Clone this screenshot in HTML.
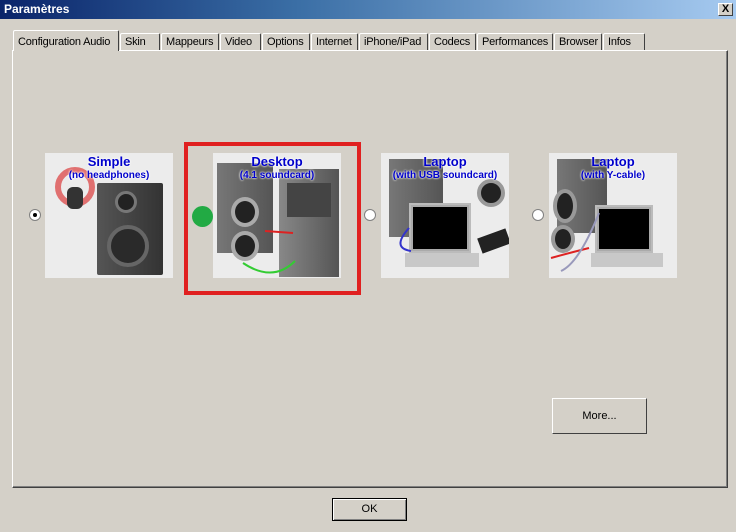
<!DOCTYPE html>
<html><head><meta charset="utf-8"><style>
*{box-sizing:border-box;margin:0;padding:0}
body{width:736px;height:532px;background:#d4d0c8;font-family:"Liberation Sans",sans-serif;font-size:11px;position:relative;overflow:hidden}
.title{position:absolute;left:0;top:0;width:736px;height:19px;background:linear-gradient(90deg,#0a246a,#3a6ea5 40%,#a6caf0);color:#fff;font-weight:bold;font-size:12px;line-height:19px;padding-left:4px}
.close{position:absolute;right:3px;top:3px;width:15px;height:13px;background:#d4d0c8;border:1px solid;border-color:#fff #404040 #404040 #fff;font-size:11px;line-height:11px;text-align:center;color:#000;font-weight:bold}
.tab{position:absolute;top:33px;height:18px;border:1px solid;border-color:#fff #404040 transparent #fff;border-bottom:none;border-radius:2px 2px 0 0;padding:0 4px;line-height:16px;font-size:11px;color:#000;background:#d4d0c8;letter-spacing:-0.2px}
.tab.a{top:30px;height:21px;z-index:2;line-height:22px}
.panel{position:absolute;left:12px;top:50px;width:716px;height:438px;border:1px solid;border-color:#fff #404040 #404040 #fff;box-shadow:inset -1px -1px 0 #808080}
.img{position:absolute;width:128px;height:125px;background:#ececec;overflow:hidden}
.t{position:absolute;left:0;width:100%;text-align:center;color:#0000cc;font-weight:bold;text-shadow:0 0 2px #fff,0 0 2px #fff}
.t1{top:1px;font-size:13px}.t2{top:17px;font-size:10px}
.radio{position:absolute;width:12px;height:12px;border-radius:50%;background:#fff;border:1px solid #808080}
.btn{position:absolute;background:#d4d0c8;border:1px solid;border-color:#fff #404040 #404040 #fff;text-align:center;font-size:11px}
</style></head><body>
<div class="title">Paramètres<div class="close">X</div></div>
<div class="tab a" style="left:13px;width:106px">Configuration Audio</div>
<div class="tab" style="left:120px;width:40px">Skin</div>
<div class="tab" style="left:161px;width:58px">Mappeurs</div>
<div class="tab" style="left:220px;width:41px">Video</div>
<div class="tab" style="left:262px;width:48px">Options</div>
<div class="tab" style="left:311px;width:47px">Internet</div>
<div class="tab" style="left:359px;width:69px">iPhone/iPad</div>
<div class="tab" style="left:429px;width:47px">Codecs</div>
<div class="tab" style="left:477px;width:76px">Performances</div>
<div class="tab" style="left:554px;width:48px">Browser</div>
<div class="tab" style="left:603px;width:42px">Infos</div>
<div class="panel"></div>

<div class="img" style="left:45px;top:153px">
<div style="position:absolute;left:52px;top:30px;width:66px;height:92px;background:linear-gradient(90deg,#555,#333);border-radius:2px"></div>
<div style="position:absolute;left:70px;top:38px;width:22px;height:22px;border-radius:50%;background:#222;border:3px solid #777"></div>
<div style="position:absolute;left:62px;top:72px;width:42px;height:42px;border-radius:50%;background:#2a2a2a;border:4px solid #666"></div>
<div style="position:absolute;left:10px;top:14px;width:40px;height:40px;border-radius:50%;border:6px solid rgba(220,60,60,.7)"></div>
<div style="position:absolute;left:22px;top:34px;width:16px;height:22px;background:#333;border-radius:6px"></div>
<div class="t t1">Simple</div><div class="t t2">(no headphones)</div></div>

<div style="position:absolute;left:184px;top:142px;width:177px;height:153px;border:4px solid #e02020"></div>
<div class="img" style="left:213px;top:153px">
<div style="position:absolute;left:4px;top:10px;width:56px;height:90px;background:linear-gradient(90deg,#777,#555)"></div>
<div style="position:absolute;left:66px;top:16px;width:60px;height:108px;background:linear-gradient(90deg,#888,#555)"></div>
<div style="position:absolute;left:74px;top:30px;width:44px;height:34px;background:#444"></div>
<div style="position:absolute;left:18px;top:44px;width:28px;height:30px;border-radius:50%;background:#222;border:4px solid #aaa"></div>
<div style="position:absolute;left:18px;top:78px;width:28px;height:30px;border-radius:50%;background:#222;border:4px solid #aaa"></div>
<svg style="position:absolute;left:0;top:0" width="128" height="125"><path d="M30 110 Q60 130 82 108" stroke="#3c3" stroke-width="2" fill="none"/><path d="M52 78 L80 80" stroke="#d22" stroke-width="2" fill="none"/></svg>
<div class="t t1">Desktop</div><div class="t t2">(4.1 soundcard)</div></div>

<div class="img" style="left:381px;top:153px">
<div style="position:absolute;left:8px;top:6px;width:54px;height:78px;background:linear-gradient(90deg,#777,#555)"></div>
<div style="position:absolute;left:28px;top:50px;width:62px;height:50px;background:#aaa;border:2px solid #bbb"><div style="margin:2px;height:42px;background:#000"></div></div>
<div style="position:absolute;left:24px;top:100px;width:74px;height:14px;background:#c8c8c8"></div>
<div style="position:absolute;left:96px;top:26px;width:28px;height:28px;border-radius:50%;background:#222;border:4px solid #999"></div>
<div style="position:absolute;left:98px;top:80px;width:30px;height:16px;background:#222;transform:rotate(-20deg)"></div>
<svg style="position:absolute;left:0;top:0" width="128" height="125"><path d="M28 75 Q10 95 30 98" stroke="#33c" stroke-width="2" fill="none"/></svg>
<div class="t t1">Laptop</div><div class="t t2">(with USB soundcard)</div></div>

<div class="img" style="left:549px;top:153px">
<div style="position:absolute;left:8px;top:6px;width:50px;height:74px;background:linear-gradient(90deg,#777,#555)"></div>
<div style="position:absolute;left:46px;top:52px;width:58px;height:48px;background:#aaa;border:2px solid #bbb"><div style="margin:2px;height:40px;background:#000"></div></div>
<div style="position:absolute;left:42px;top:100px;width:72px;height:14px;background:#c8c8c8"></div>
<div style="position:absolute;left:4px;top:36px;width:24px;height:34px;border-radius:50%;background:#222;border:4px solid #999"></div>
<div style="position:absolute;left:2px;top:72px;width:24px;height:28px;border-radius:50%;background:#222;border:4px solid #999"></div>
<svg style="position:absolute;left:0;top:0" width="128" height="125"><path d="M2 105 Q20 100 40 95" stroke="#d22" stroke-width="2" fill="none"/><path d="M12 118 Q30 110 50 60" stroke="#99b" stroke-width="2" fill="none"/></svg>
<div class="t t1">Laptop</div><div class="t t2">(with Y-cable)</div></div>

<div class="radio" style="left:29px;top:209px"><div style="width:4px;height:4px;background:#000;border-radius:50%;margin:3px"></div></div>
<div style="position:absolute;left:192px;top:206px;width:21px;height:21px;border-radius:50%;background:#22aa44"></div>
<div class="radio" style="left:364px;top:209px"></div>
<div class="radio" style="left:532px;top:209px"></div>

<div class="btn" style="left:552px;top:398px;width:95px;height:36px;line-height:34px">More...</div>
<div class="btn" style="left:332px;top:498px;width:75px;height:23px;line-height:21px;border:1px solid #000;box-shadow:inset 1px 1px 0 #fff,inset -1px -1px 0 #808080">OK</div>
</body></html>
